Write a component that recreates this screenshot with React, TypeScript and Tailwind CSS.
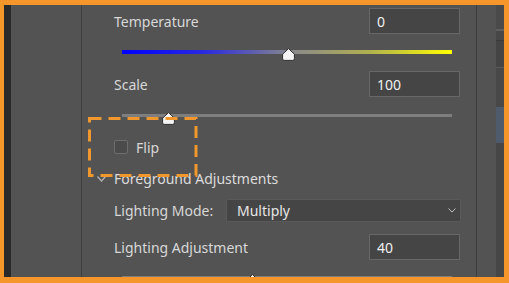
import React from "react";

const font = { fontFamily: '"Noto Sans", "Open Sans", sans-serif' };

function Thumb({ left }: { left: number }) {
	return (
		<svg
			className="absolute top-[-2px]"
			style={{ left }}
			width="13"
			height="13"
			viewBox="0 0 13 13"
		>
			<path
				d="M6.5 0.6 L12.4 6.2 V10.8 Q12.4 12.4 10.8 12.4 H2.2 Q0.6 12.4 0.6 10.8 V6.2 Z"
				fill="#f4f4f4"
				stroke="#2e2e2e"
				strokeWidth="1"
			/>
		</svg>
	);
}

function NumField({ value }: { value: string }) {
	return (
		<div className="w-[91px] h-[26px] flex items-center pl-[7px] bg-[#454545] border border-[#676767] text-[#efefef] text-[14px]">
			{value}
		</div>
	);
}

function Row({ label, children }: { label: string; children: React.ReactNode }) {
	return (
		<div className="flex items-center justify-between h-[26px]">
			<span className="text-[14px] text-[#d8d8d8]">{label}</span>
			{children}
		</div>
	);
}

export default function App() {
	return (
		<div
			className="relative w-[509px] h-[283px] bg-[#f5962a] pt-[5px] pl-[4px] pr-[5px] pb-[6px] overflow-hidden"
			style={font}
		>
			<div className="flex h-full overflow-hidden">
				<div className="w-[7px] bg-[#2a2a2a]" />
				<div className="w-[70px] bg-[#535353] border-r border-[#3f3f3f] box-content" />

				<div className="w-[394px] bg-[#535353] overflow-hidden">
					<div className="pt-[3px] pl-[32px] pr-[16px]">
						<Row label="Temperature">
							<NumField value="0" />
						</Row>
						<div className="h-[37px] pt-[16px]">
							<div className="relative mx-[8px] h-[4px] bg-[linear-gradient(to_right,#0000ff,#2a2ae0_25%,#8a8a8a_52%,#b0b050_75%,#ffff00)]">
								<Thumb left={160} />
							</div>
						</div>

						<Row label="Scale">
							<NumField value="100" />
						</Row>
						<div className="h-[32px] pt-[17px]">
							<div className="relative mx-[8px] h-[3px] bg-[#7e7e7e]">
								<Thumb left={40} />
							</div>
						</div>

						<div className="h-[36px] flex items-center gap-[8px]">
							<div className="w-[14px] h-[14px] rounded-[2px] border border-[#6e6e6e] bg-[#4b4b4b]" />
							<span className="text-[14px] text-[#d8d8d8]">Flip</span>
						</div>

						<div className="h-[27px] -ml-[17px] flex items-center gap-[8px]">
							<svg width="9" height="6" viewBox="0 0 9 6">
								<path d="M0.5 0.5 L4.5 5 L8.5 0.5" fill="none" stroke="#b4b4b4" strokeWidth="1.2" />
							</svg>
							<span className="text-[14px] text-[#dcdcdc]">Foreground Adjustments</span>
						</div>

						<div className="mt-[7px] h-[23px] flex items-center justify-between">
							<span className="text-[14px] text-[#d8d8d8]">Lighting Mode:</span>
							<div className="w-[235px] h-[23px] flex items-center justify-between pl-[10px] pr-[4px] bg-[#454545] border border-[#5a5a5a] rounded-[2px] mr-[-1px]">
								<span className="text-[14px] text-[#e6e6e6]">Multiply</span>
								<svg width="8" height="5" viewBox="0 0 8 5">
									<path d="M0.5 0.5 L4 4 L7.5 0.5" fill="none" stroke="#bdbdbd" strokeWidth="1" />
								</svg>
							</div>
						</div>

						<div className="mt-[12px]">
							<Row label="Lighting Adjustment">
								<NumField value="40" />
							</Row>
						</div>
						<div className="h-[30px] pt-[16px]">
							<div className="relative mx-[8px] h-[3px] bg-[#7e7e7e]">
								<Thumb left={124} />
							</div>
						</div>
					</div>
				</div>

				<div className="w-[20px] bg-[#535353] border-l border-[#3d3d3d]" />
				<div className="w-[8px] flex flex-col">
					<div className="h-[24px] bg-[#4a4a4a]" />
					<div className="h-[2px] bg-[#5e5e5e]" />
					<div className="h-[9px] bg-[#474747]" />
					<div className="h-[1px] bg-[#393939]" />
					<div className="h-[26px] bg-[#444444]" />
					<div className="h-[1px] bg-[#5a5a5a]" />
					<div className="h-[39px] bg-[#484848]" />
					<div className="h-[36px] bg-[#4d5b6c]" />
					<div className="flex-1 bg-[#464646]" />
				</div>
			</div>

			<svg
				className="absolute left-[86px] top-[115px]"
				width="114"
				height="64"
				viewBox="0 0 114 64"
			>
				<rect
					x="3.5"
					y="3.5"
					width="106.5"
					height="57"
					fill="none"
					stroke="#f0982e"
					strokeWidth="3"
					strokeDasharray="12 7"
				/>
			</svg>
		</div>
	);
}
